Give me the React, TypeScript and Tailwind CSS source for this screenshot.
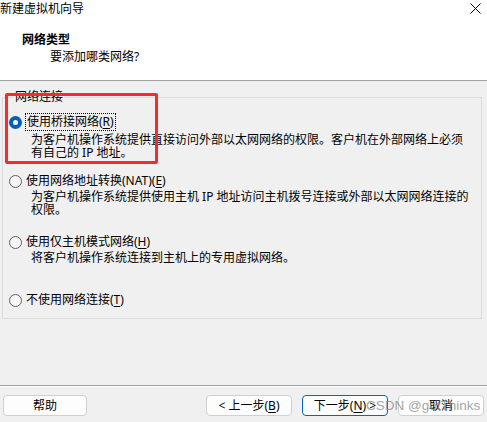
import React from "react";

function Radio({ checked }: { checked?: boolean }) {
  return checked ? (
    <span className="w-[13px] h-[13px] rounded-full bg-[#005fb8] flex items-center justify-center shrink-0">
      <span className="w-[5px] h-[5px] rounded-full bg-white" />
    </span>
  ) : (
    <span className="w-[13px] h-[13px] rounded-full border border-[#5f5f5f] bg-[#f6f6f6] shrink-0" />
  );
}

function Btn({ children, w, primary }: { children: React.ReactNode; w: string; primary?: boolean }) {
  return (
    <div
      className={
        "h-[21px] flex items-center justify-center rounded-[4px] bg-[#fdfdfd] text-[12px] leading-[16px] " +
        w +
        (primary ? " border border-[#0067c0]" : " border border-[#d0d0d0]")
      }
    >
      {children}
    </div>
  );
}

export default function App() {
  return (
    <div className="relative w-[487px] h-[422px] overflow-hidden bg-[#f0f0f0] text-black text-[12px] font-['Noto_Sans','Noto_Sans_CJK_SC',sans-serif] flex flex-col">
      {/* header */}
      <div className="bg-white h-[81px] border-b border-[#a0a0a0] shrink-0">
        <div className="h-[18px] flex items-center justify-between">
          <span className="leading-[18px]">新建虚拟机向导</span>
          <svg width="11" height="11" viewBox="0 0 11 11" className="mr-[6px] mt-[-1px]">
            <path d="M0.5 0.5 L10.5 10.5 M10.5 0.5 L0.5 10.5" stroke="#000" strokeWidth="1" fill="none" />
          </svg>
        </div>
        <div className="mt-[14px] pl-[22px] font-bold leading-[16px]">网络类型</div>
        <div className="mt-[1px] pl-[50px] leading-[16px]">要添加哪类网络?</div>
      </div>

      {/* body */}
      <div className="flex-1 px-[2px] pr-[5px]">
        <fieldset className="mt-[8px] border border-[#dcdcdc] pl-[6px] pb-[9px]">
          <legend className="ml-[5px] px-[1px] leading-[16px]">网络连接</legend>

          <div className="mt-[8px] h-[18px] flex items-center">
            <Radio checked />
            <span className="ml-[3px] px-[1px] h-[18px] leading-[16px] border border-dotted border-black">
              使用桥接网络(<span className="underline underline-offset-2">R</span>)
            </span>
          </div>
          <div className="mt-[2px] pl-[22px] leading-[13px]">
            <div>为客户机操作系统提供直接访问外部以太网网络的权限。客户机在外部网络上必须</div>
            <div>有自己的 IP 地址。</div>
          </div>

          <div className="mt-[13px] h-[18px] flex items-center">
            <Radio />
            <span className="ml-[4px] leading-[16px]">
              使用网络地址转换(NAT)(<span className="underline underline-offset-2">E</span>)
            </span>
          </div>
          <div className="pl-[22px] leading-[13px]">
            <div>为客户机操作系统提供使用主机 IP 地址访问主机拨号连接或外部以太网网络连接的</div>
            <div>权限。</div>
          </div>

          <div className="mt-[17px] h-[18px] flex items-center">
            <Radio />
            <span className="ml-[4px] leading-[16px]">
              使用仅主机模式网络(<span className="underline underline-offset-2">H</span>)
            </span>
          </div>
          <div className="pl-[22px] leading-[13px]">
            <div>将客户机操作系统连接到主机上的专用虚拟网络。</div>
          </div>

          <div className="mt-[27px] h-[18px] flex items-center">
            <Radio />
            <span className="ml-[4px] leading-[16px]">
              不使用网络连接(<span className="underline underline-offset-2">T</span>)
            </span>
          </div>
        </fieldset>
      </div>

      {/* footer */}
      <div className="h-[37px] shrink-0 border-t border-[#a0a0a0]">
        <div className="h-[1px] bg-white" />
        <div className="mt-[8px] flex items-center pl-[3px] pr-[3px]">
          <Btn w="w-[84px]">帮助</Btn>
          <div className="flex-1" />
          <div className="flex gap-[10px]">
            <Btn w="w-[86px]">
              &lt; 上一步(<span className="underline underline-offset-2">B</span>)
            </Btn>
            <Btn w="w-[86px]" primary>
              下一步(<span className="underline underline-offset-2">N</span>) &gt;
            </Btn>
            <Btn w="w-[86px]">取消</Btn>
          </div>
        </div>
      </div>

      {/* annotation */}
      <div className="absolute left-[5px] top-[93px] w-[153px] h-[71px] border-[3px] border-[#f82a2a] rounded-[2px]" />
      {/* watermark */}
      <div className="absolute left-[366px] top-[397px] text-[13.5px] leading-[18px] text-[#8c8c8c]/80 font-['Liberation_Sans',sans-serif]">
        CSDN @gotThinks
      </div>
    </div>
  );
}
